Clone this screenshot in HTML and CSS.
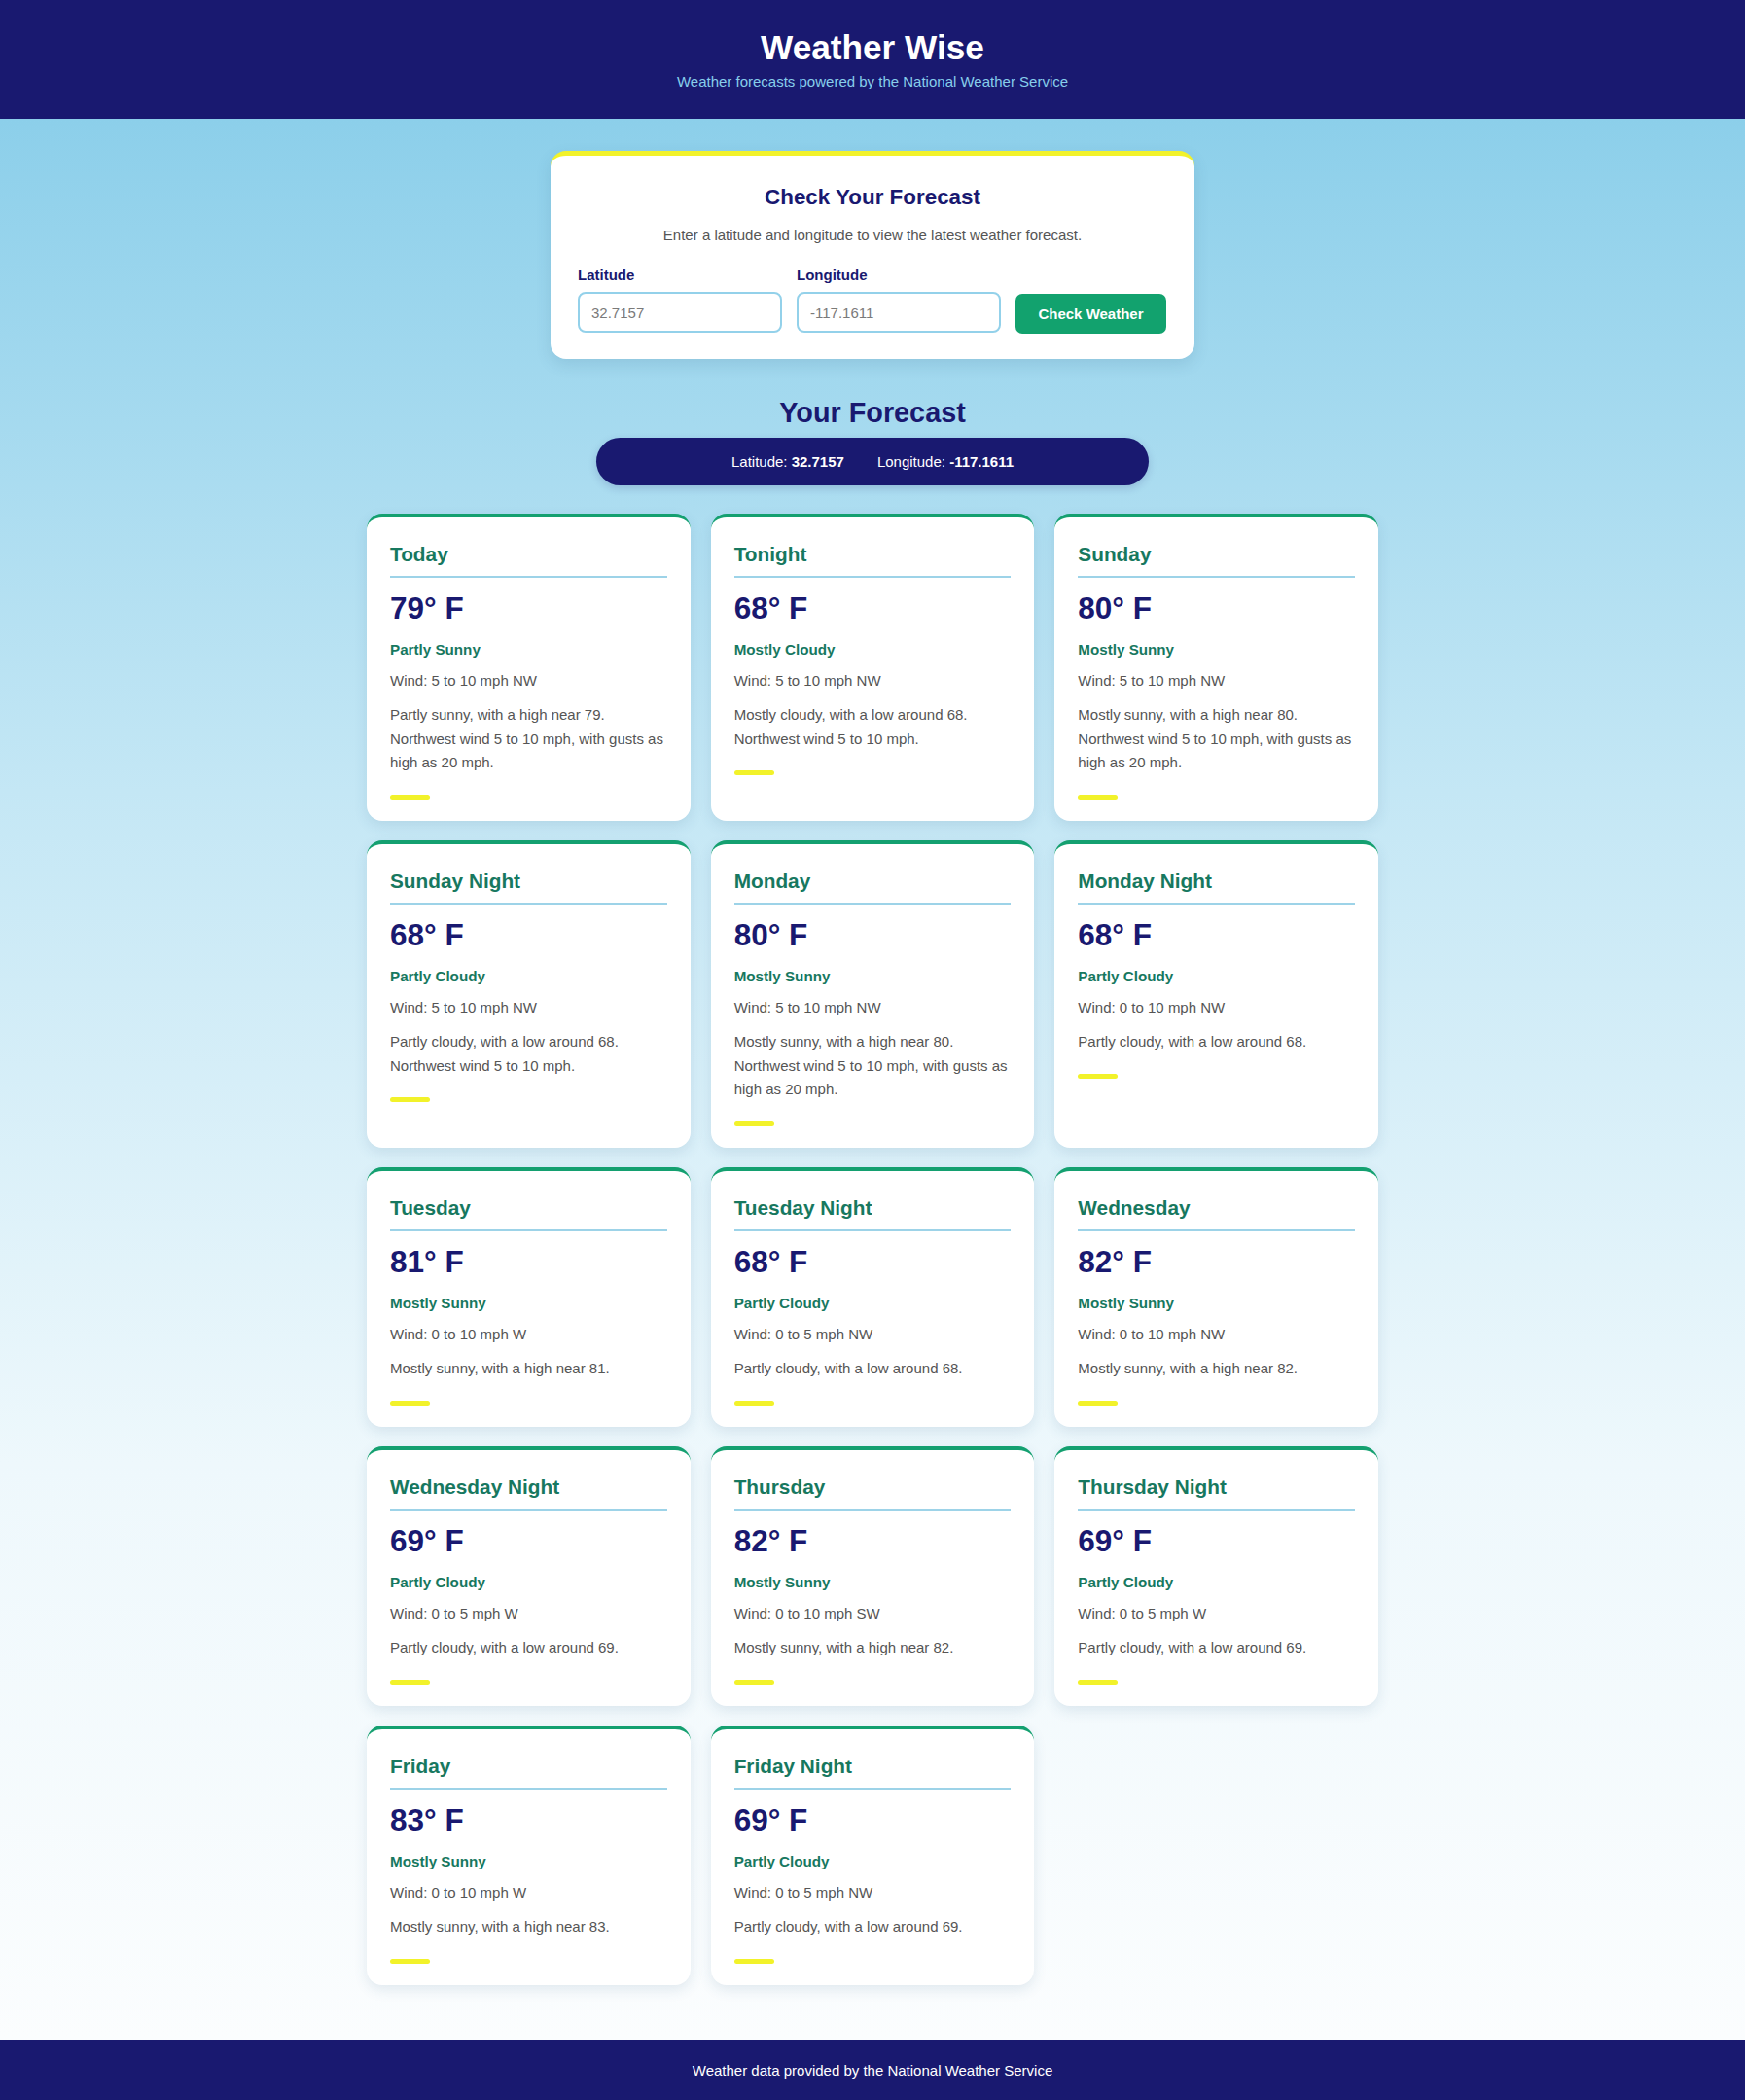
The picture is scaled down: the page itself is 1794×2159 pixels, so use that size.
FILE: index.html
```html
<!DOCTYPE html>
<html lang="en">
<head>
<meta charset="utf-8">
<title>Weather Wise</title>
<link rel="stylesheet" href="styles.css">
</head>
<body>
<header class="site-header">
  <h1 class="site-title">Weather Wise</h1>
  <p class="site-tagline">Weather forecasts powered by the National Weather Service</p>
</header>

<main class="main">
  <section class="search-card">
    <h2 class="search-title">Check Your Forecast</h2>
    <p class="search-intro">Enter a latitude and longitude to view the latest weather forecast.</p>
    <form class="search-form">
      <div class="field">
        <label class="field-label" for="lat">Latitude</label>
        <input class="field-input" id="lat" type="text" placeholder="32.7157">
      </div>
      <div class="field">
        <label class="field-label" for="lon">Longitude</label>
        <input class="field-input" id="lon" type="text" placeholder="-117.1611">
      </div>
      <button class="search-btn" type="button">Check Weather</button>
    </form>
  </section>

  <section class="forecast">
    <h2 class="forecast-title">Your Forecast</h2>
    <div class="coords">
      <span class="coord">Latitude: <strong>32.7157</strong></span>
      <span class="coord">Longitude: <strong>-117.1611</strong></span>
    </div>

    <div class="period-grid">
      <article class="period">
        <h3 class="period-name">Today</h3>
        <p class="period-temp">79° F</p>
        <p class="period-cond">Partly Sunny</p>
        <p class="period-wind">Wind: 5 to 10 mph NW</p>
        <p class="period-desc">Partly sunny, with a high near 79. Northwest wind 5 to 10 mph, with gusts as high as 20 mph.</p>
        <span class="period-accent"></span>
      </article>
      <article class="period">
        <h3 class="period-name">Tonight</h3>
        <p class="period-temp">68° F</p>
        <p class="period-cond">Mostly Cloudy</p>
        <p class="period-wind">Wind: 5 to 10 mph NW</p>
        <p class="period-desc">Mostly cloudy, with a low around 68. Northwest wind 5 to 10 mph.</p>
        <span class="period-accent"></span>
      </article>
      <article class="period">
        <h3 class="period-name">Sunday</h3>
        <p class="period-temp">80° F</p>
        <p class="period-cond">Mostly Sunny</p>
        <p class="period-wind">Wind: 5 to 10 mph NW</p>
        <p class="period-desc">Mostly sunny, with a high near 80. Northwest wind 5 to 10 mph, with gusts as high as 20 mph.</p>
        <span class="period-accent"></span>
      </article>
      <article class="period">
        <h3 class="period-name">Sunday Night</h3>
        <p class="period-temp">68° F</p>
        <p class="period-cond">Partly Cloudy</p>
        <p class="period-wind">Wind: 5 to 10 mph NW</p>
        <p class="period-desc">Partly cloudy, with a low around 68. Northwest wind 5 to 10 mph.</p>
        <span class="period-accent"></span>
      </article>
      <article class="period">
        <h3 class="period-name">Monday</h3>
        <p class="period-temp">80° F</p>
        <p class="period-cond">Mostly Sunny</p>
        <p class="period-wind">Wind: 5 to 10 mph NW</p>
        <p class="period-desc">Mostly sunny, with a high near 80. Northwest wind 5 to 10 mph, with gusts as high as 20 mph.</p>
        <span class="period-accent"></span>
      </article>
      <article class="period">
        <h3 class="period-name">Monday Night</h3>
        <p class="period-temp">68° F</p>
        <p class="period-cond">Partly Cloudy</p>
        <p class="period-wind">Wind: 0 to 10 mph NW</p>
        <p class="period-desc">Partly cloudy, with a low around 68.</p>
        <span class="period-accent"></span>
      </article>
      <article class="period">
        <h3 class="period-name">Tuesday</h3>
        <p class="period-temp">81° F</p>
        <p class="period-cond">Mostly Sunny</p>
        <p class="period-wind">Wind: 0 to 10 mph W</p>
        <p class="period-desc">Mostly sunny, with a high near 81.</p>
        <span class="period-accent"></span>
      </article>
      <article class="period">
        <h3 class="period-name">Tuesday Night</h3>
        <p class="period-temp">68° F</p>
        <p class="period-cond">Partly Cloudy</p>
        <p class="period-wind">Wind: 0 to 5 mph NW</p>
        <p class="period-desc">Partly cloudy, with a low around 68.</p>
        <span class="period-accent"></span>
      </article>
      <article class="period">
        <h3 class="period-name">Wednesday</h3>
        <p class="period-temp">82° F</p>
        <p class="period-cond">Mostly Sunny</p>
        <p class="period-wind">Wind: 0 to 10 mph NW</p>
        <p class="period-desc">Mostly sunny, with a high near 82.</p>
        <span class="period-accent"></span>
      </article>
      <article class="period">
        <h3 class="period-name">Wednesday Night</h3>
        <p class="period-temp">69° F</p>
        <p class="period-cond">Partly Cloudy</p>
        <p class="period-wind">Wind: 0 to 5 mph W</p>
        <p class="period-desc">Partly cloudy, with a low around 69.</p>
        <span class="period-accent"></span>
      </article>
      <article class="period">
        <h3 class="period-name">Thursday</h3>
        <p class="period-temp">82° F</p>
        <p class="period-cond">Mostly Sunny</p>
        <p class="period-wind">Wind: 0 to 10 mph SW</p>
        <p class="period-desc">Mostly sunny, with a high near 82.</p>
        <span class="period-accent"></span>
      </article>
      <article class="period">
        <h3 class="period-name">Thursday Night</h3>
        <p class="period-temp">69° F</p>
        <p class="period-cond">Partly Cloudy</p>
        <p class="period-wind">Wind: 0 to 5 mph W</p>
        <p class="period-desc">Partly cloudy, with a low around 69.</p>
        <span class="period-accent"></span>
      </article>
      <article class="period">
        <h3 class="period-name">Friday</h3>
        <p class="period-temp">83° F</p>
        <p class="period-cond">Mostly Sunny</p>
        <p class="period-wind">Wind: 0 to 10 mph W</p>
        <p class="period-desc">Mostly sunny, with a high near 83.</p>
        <span class="period-accent"></span>
      </article>
      <article class="period">
        <h3 class="period-name">Friday Night</h3>
        <p class="period-temp">69° F</p>
        <p class="period-cond">Partly Cloudy</p>
        <p class="period-wind">Wind: 0 to 5 mph NW</p>
        <p class="period-desc">Partly cloudy, with a low around 69.</p>
        <span class="period-accent"></span>
      </article>
    </div>
  </section>
</main>

<footer class="site-footer">
  <p class="footer-text">Weather data provided by the National Weather Service</p>
</footer>
</body>
</html>
```

FILE: styles.css
```css
* {
  box-sizing: border-box;
}

html, body {
  margin: 0;
  padding: 0;
}

body {
  font-family: "Liberation Sans", Arial, sans-serif;
  color: #333;
  background: #ffffff;
}

/* ---------- header ---------- */
.site-header {
  background: #191970;
  text-align: center;
  height: 122px;
  padding-top: 29px;
}

.site-title {
  margin: 0;
  font-size: 35.2px;
  line-height: 40px;
  font-weight: 700;
  color: #ffffff;
}

.site-tagline {
  margin: 6px 0 0;
  font-size: 15px;
  line-height: 17px;
  color: #87ceeb;
}

/* ---------- main area ---------- */
.main {
  background: linear-gradient(180deg, #8ccfea 0%, #c4e7f5 35%, #eef8fc 70%, #fbfdfe 100%);
  padding: 33px 0 56px;
}

/* search card */
.search-card {
  width: 662px;
  margin: 0 auto;
  background: #ffffff;
  border-top: 5px solid #f2f22a;
  border-radius: 16px;
  padding: 30px 28px 27px;
  text-align: center;
  box-shadow: 0 6px 16px rgba(40, 90, 130, 0.14);
}

.search-title {
  margin: 0;
  font-size: 22.4px;
  line-height: 26px;
  font-weight: 700;
  color: #191970;
}

.search-intro {
  margin: 17px 0 0;
  font-size: 15px;
  line-height: 17px;
  color: #555;
}

.search-form {
  display: flex;
  align-items: flex-end;
  gap: 15px;
  margin-top: 24px;
  text-align: left;
}

.field {
  width: 210px;
}

.field-label {
  display: block;
  margin-bottom: 9px;
  font-size: 15px;
  line-height: 17px;
  font-weight: 700;
  color: #191970;
}

.field-input {
  display: block;
  width: 100%;
  height: 42px;
  border: 2px solid #93d1ea;
  border-radius: 8px;
  padding: 0 12px;
  font-family: inherit;
  font-size: 15px;
  color: #333;
  background: #fff;
  outline: none;
}

.field-input::placeholder {
  color: #7a7a7a;
}

.search-btn {
  width: 155px;
  height: 41px;
  margin-bottom: -1px;
  border: none;
  border-radius: 7px;
  background: #12a26e;
  color: #ffffff;
  font-family: inherit;
  font-size: 15px;
  font-weight: 700;
  cursor: pointer;
}

/* forecast section */
.forecast {
  margin-top: 39px;
  text-align: center;
}

.forecast-title {
  margin: 0;
  font-size: 28.8px;
  line-height: 33px;
  font-weight: 700;
  color: #191970;
}

.coords {
  width: 568px;
  height: 49px;
  margin: 9px auto 0;
  background: #191970;
  border-radius: 25px;
  display: flex;
  justify-content: center;
  align-items: center;
  gap: 34px;
  font-size: 15px;
  color: #ffffff;
  box-shadow: 0 3px 8px rgba(25, 25, 112, 0.18);
}

.coord strong {
  font-weight: 700;
}

.period-grid {
  width: 1040px;
  margin: 29px auto 0;
  display: grid;
  grid-template-columns: repeat(3, 1fr);
  column-gap: 21px;
  row-gap: 20.5px;
  text-align: left;
}

/* one forecast period card */
.period {
  background: #ffffff;
  border-top: 4px solid #14a070;
  border-radius: 16px;
  padding: 26px 24px 22px;
  box-shadow: 0 5px 14px rgba(40, 90, 130, 0.12);
}

.period-name {
  margin: 0;
  padding-bottom: 10px;
  border-bottom: 2px solid #9dd3e8;
  font-size: 20.8px;
  line-height: 24px;
  font-weight: 700;
  color: #17785f;
}

.period-temp {
  margin: 13px 0 0;
  font-size: 31.5px;
  line-height: 37px;
  font-weight: 700;
  color: #191970;
}

.period-cond {
  margin: 15px 0 0;
  font-size: 15.2px;
  line-height: 18px;
  font-weight: 700;
  color: #17785f;
}

.period-wind {
  margin: 14px 0 0;
  font-size: 15px;
  line-height: 18px;
  color: #555;
}

.period-desc {
  margin: 14px 0 0;
  font-size: 15px;
  line-height: 24.5px;
  color: #555;
}

.period-accent {
  display: block;
  width: 41px;
  height: 5px;
  margin-top: 20px;
  border-radius: 3px;
  background: #f2f22a;
}

/* ---------- footer ---------- */
.site-footer {
  background: #191970;
  padding: 23px 0;
  text-align: center;
}

.footer-text {
  margin: 0;
  font-size: 15px;
  line-height: 17px;
  color: #ffffff;
}
```
